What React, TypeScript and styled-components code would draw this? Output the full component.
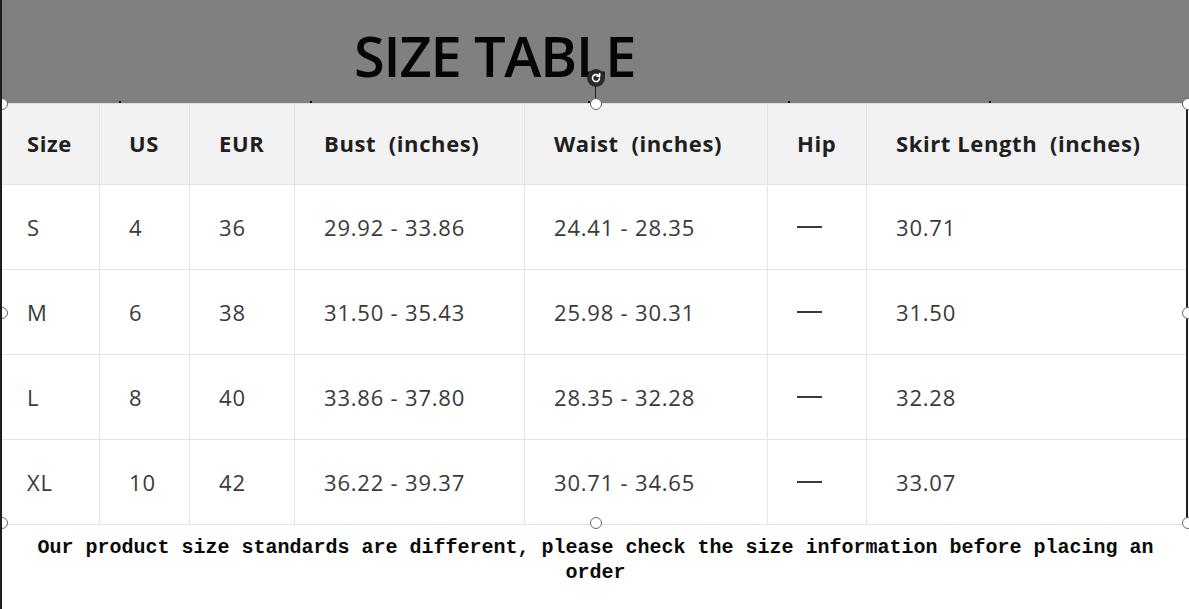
import styled, { createGlobalStyle } from "styled-components";

const GlobalStyle = createGlobalStyle`
  html, body {
    margin: 0;
    padding: 0;
    background: #ffffff;
  }
  body {
    font-family: "Open Sans", "Noto Sans", sans-serif;
  }
`;

const Page = styled.div`
  position: relative;
  width: 1189px;
  height: 609px;
  overflow: hidden;
  background: #ffffff;
  border-left: 2px solid #1e1e1e;
  box-sizing: border-box;
`;

const Banner = styled.header`
  height: 103px;
  background: #808080;
  padding-left: 352px;
  box-sizing: border-box;
  display: flex;
  align-items: flex-start;
`;

const Title = styled.h1`
  margin: 0;
  padding-top: 22px;
  font-family: "Open Sans", "Noto Sans", sans-serif;
  font-weight: 600;
  font-size: 56px;
  line-height: 1.2;
  color: #050505;
  letter-spacing: -1.2px;
`;

const Body = styled.div`
  border-right: 2px solid #1e1e1e;
  margin-right: 1px;
`;

const Grid = styled.div`
  display: grid;
  grid-template-columns: 98px 90px 105px 230px 243px 99px 1fr;
  grid-auto-rows: 85px;
  grid-template-rows: 81px;
  border-top: 1px solid #dedede;
`;

const Cell = styled.div<{ $head?: boolean; $first?: boolean; $last?: boolean }>`
  display: flex;
  align-items: center;
  padding-left: ${(p) => (p.$first ? "25px" : "29px")};
  padding-bottom: ${(p) => (p.$head ? "3px" : "0")};
  border-right: ${(p) => (p.$last ? "none" : "1px solid #e4e4e4")};
  border-bottom: 1px solid #e4e4e4;
  background: ${(p) => (p.$head ? "#f2f2f2" : "#ffffff")};
  font-family: "Open Sans", "Noto Sans", sans-serif;
  font-size: 22px;
  letter-spacing: ${(p) => (p.$head ? "0.6px" : "0.8px")};
  font-weight: ${(p) => (p.$head ? 700 : 400)};
  color: ${(p) => (p.$head ? "#1f1f1f" : "#3a3a3a")};
  white-space: nowrap;
`;

const Dash = styled.span`
  display: inline-block;
  width: 25px;
  height: 2px;
  background: #3a3a3a;
`;

const Note = styled.p`
  margin: 0;
  padding: 10px 20px 0 20px;
  text-align: center;
  font-family: "Liberation Mono", "DejaVu Sans Mono", monospace;
  font-size: 20px;
  line-height: 25px;
  font-weight: 700;
  color: #0a0a0a;
`;

const Handle = styled.span<{ $x: number; $y: number }>`
  position: absolute;
  left: ${(p) => p.$x - 6}px;
  top: ${(p) => p.$y - 6}px;
  width: 10px;
  height: 10px;
  border-radius: 50%;
  background: #ffffff;
  border: 1px solid #6a6a6a;
`;

const Tick = styled.span<{ $x: number }>`
  position: absolute;
  left: ${(p) => p.$x}px;
  top: 101px;
  width: 2px;
  height: 2px;
  background: #111111;
`;

const RotateStem = styled.span`
  position: absolute;
  left: 593px;
  top: 85px;
  width: 1px;
  height: 15px;
  background: #222222;
`;

const RotateKnob = styled.span`
  position: absolute;
  left: 585px;
  top: 69px;
  width: 18px;
  height: 18px;
  border-radius: 50%;
  background: #2a2a2a;
  display: flex;
  align-items: center;
  justify-content: center;
`;

const headers = ["Size", "US", "EUR", "Bust\u00a0 (inches)", "Waist\u00a0 (inches)", "Hip", "Skirt Length\u00a0 (inches)"];

const rows = [
  ["S", "4", "36", "29.92 - 33.86", "24.41 - 28.35", "-", "30.71"],
  ["M", "6", "38", "31.50 - 35.43", "25.98 - 30.31", "-", "31.50"],
  ["L", "8", "40", "33.86 - 37.80", "28.35 - 32.28", "-", "32.28"],
  ["XL", "10", "42", "36.22 - 39.37", "30.71 - 34.65", "-", "33.07"],
];

const handles = [
  [0, 104], [594, 104], [1186, 104],
  [0, 313], [1186, 313],
  [0, 523], [594, 523], [1186, 523],
];

const ticks = [117, 308, 586, 786, 987];

export default function App() {
  return (
    <>
      <GlobalStyle />
      <Page>
        <Banner>
          <Title>SIZE TABLE</Title>
        </Banner>
        <Body>
          <Grid>
            {headers.map((h, i) => (
              <Cell key={h} $head $first={i === 0} $last={i === headers.length - 1}>
                {h}
              </Cell>
            ))}
            {rows.map((row) =>
              row.map((v, i) => (
                <Cell key={row[0] + i} $first={i === 0} $last={i === row.length - 1}>
                  {v === "-" ? <Dash /> : v}
                </Cell>
              ))
            )}
          </Grid>
        </Body>
        <Note>
          Our product size standards are different, please check the size information before placing an order
        </Note>

        {ticks.map((x) => (
          <Tick key={x} $x={x} />
        ))}
        <RotateStem />
        <RotateKnob>
          <svg width="12" height="12" viewBox="0 0 12 12" fill="none">
            <path d="M9.5 6a3.5 3.5 0 1 1-1.2-2.6" stroke="#ffffff" strokeWidth="1.6" strokeLinecap="round" />
            <path d="M9.6 1.6v2.6H7" stroke="#ffffff" strokeWidth="1.6" strokeLinecap="round" strokeLinejoin="round" />
          </svg>
        </RotateKnob>
        {handles.map(([x, y]) => (
          <Handle key={`${x}-${y}`} $x={x} $y={y} />
        ))}
      </Page>
    </>
  );
}
